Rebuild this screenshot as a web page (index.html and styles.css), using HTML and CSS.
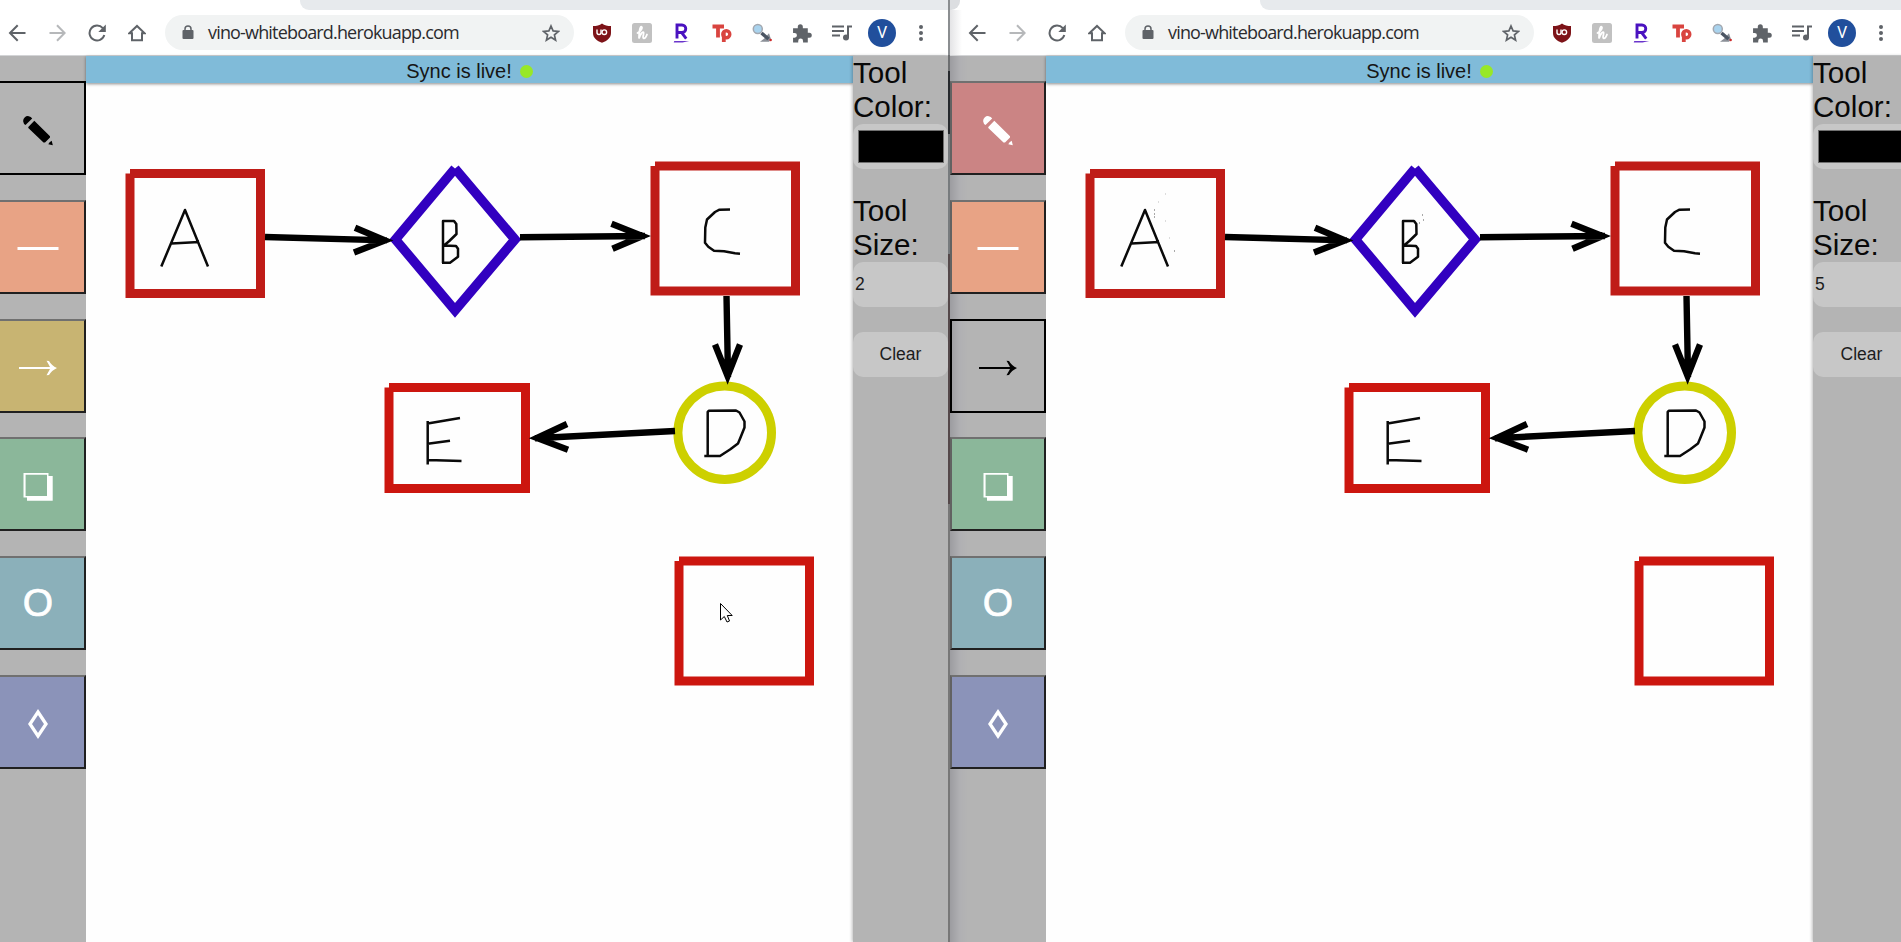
FILE: index.html
```html
<!DOCTYPE html>
<html lang="en">
<head>
<meta charset="utf-8">
<title>Whiteboard</title>
<link rel="stylesheet" href="styles.css">
</head>
<body>
<svg class="defs" width="0" height="0">
  <symbol id="back" viewBox="0 0 18 18"><path d="M17.500 9H2.500M9.700 1.200L2 9l7.700 7.800" fill="none" stroke="currentColor" stroke-width="2"/></symbol>
  <symbol id="forward" viewBox="0 0 18 18"><path d="M1.500 9h15M9 1.200L16.700 9l-7.700 7.800" fill="none" stroke="currentColor" stroke-width="2"/></symbol>
  <symbol id="reload" viewBox="0 0 18 18"><path d="M14.800 4.200A7.500 7.500 0 1 0 16.300 11" fill="none" stroke="currentColor" stroke-width="2"/><path d="M17.800 .5v7.500h-7.500z" fill="currentColor"/></symbol>
  <symbol id="home" viewBox="0 0 18 18"><path d="M1.300 9.300L9 2l7.700 7.300H14V16.300H4V9.300z" fill="none" stroke="currentColor" stroke-width="2"/></symbol>
  <symbol id="lock" viewBox="0 0 12 15"><rect x=".5" y="5" width="11" height="9" rx="1" fill="currentColor"/><path d="M3 6V4a3 3 0 0 1 6 0v2" fill="none" stroke="currentColor" stroke-width="1.500"/></symbol>
  <symbol id="star" viewBox="0 0 18 18"><path d="M9 2l2.100 4.900 5.300.5-4 3.500 1.200 5.200L9 13.300l-4.600 2.800 1.200-5.200-4-3.500 5.300-.5z" fill="none" stroke="currentColor" stroke-width="1.700"/></symbol>
  <symbol id="shield" viewBox="0 0 20 20"><path d="M10 .5C12.500 2.500 15.500 3 19 3V10c0 5-4 8-9 9.800C5 18 1 15 1 10V3c3.500 0 6.500-.5 9-2.500z" fill="#7d1318"/><path d="M5 6.500v3a2 2 0 0 0 4 0v-3" fill="none" stroke="#fff" stroke-width="1.400"/><circle cx="12.300" cy="9.200" r="2.300" fill="none" stroke="#fff" stroke-width="1.400"/></symbol>
  <symbol id="honey" viewBox="0 0 20 20"><rect width="20" height="20" rx="2.500" fill="#c1c1c1"/><path d="M5.500 10C9 8 11 4.500 9.500 3.800S7 9 7 15.500C8.500 11 10.500 8.500 11.500 9.300S10 14.500 11.500 15.200 14.500 13 15 11.500" fill="none" stroke="#fff" stroke-width="1.800" stroke-linecap="round"/></symbol>
  <symbol id="rakuten" viewBox="0 0 16 18"><path d="M3.500 14V1.800H8a3.200 3.200 0 0 1 0 6.800H3.500M7.500 8.500l4.300 5.500" fill="none" stroke="#4a12c0" stroke-width="2.600"/><path d="M.5 17.500h8l6-1.200H1z" fill="#6a35cc"/></symbol>
  <symbol id="tp" viewBox="0 0 20 18"><path d="M.5 2.500H12M6 2v11.500M11.800 18V8.500" fill="none" stroke="#d9443f" stroke-width="3.800"/><circle cx="14.300" cy="10.300" r="3.500" fill="none" stroke="#d9443f" stroke-width="3.400"/></symbol>
  <symbol id="inspect" viewBox="0 0 20 20"><path d="M8 18.800l4-3 5-5.500 2 6-2 2.500z" fill="#8b9098"/><path d="M9.500 10l7 6" stroke="#4b5563" stroke-width="3.500"/><circle cx="5.800" cy="6" r="4.500" fill="#a9d3ee" stroke="#a3a8b0" stroke-width="1.500"/><circle cx="18.700" cy="17" r="1.200" fill="#cb2b2b"/></symbol>
  <symbol id="puzzle" viewBox="0 0 19 19"><path d="M1 5h4.500V3.600a2.400 2.400 0 0 1 4.800 0V5H15v4.300h1.400a2.400 2.400 0 0 1 0 4.800H15V18.500H10.500V17a2.300 2.300 0 0 0-4.600 0v1.500H1V14h1.400a2.300 2.300 0 0 0 0-4.600H1z" fill="currentColor"/></symbol>
  <symbol id="queue" viewBox="0 0 20 17"><path d="M0 2h12M0 6.500h12M0 11h8M16 13V2H20" fill="none" stroke="currentColor" stroke-width="2"/><circle cx="14" cy="13" r="3" fill="currentColor"/></symbol>
  <symbol id="pencil" viewBox="0 0 30 30"><path d="M2.500 9A4.800 4.800 0 1 1 9.200 2.600zM5.300 11L11.300 4.800 27 20.300V21.500L22 26.500H20.500L5.300 12z" fill="currentColor"/><path d="M25.300 28.200Q26.200 26.300 28.700 24.800L29.800 29.300z" fill="currentColor"/></symbol>
  <symbol id="line" viewBox="0 0 42 30"><path d="M.5 14.500h41" stroke="currentColor" stroke-width="3"/></symbol>
  <symbol id="arrow" viewBox="0 0 38 30"><path d="M0 15H34" stroke="currentColor" stroke-width="2"/><path d="M27.500 7.800L30 8Q32.500 12.500 38 15 32.500 17.500 30 22L27.500 22.200Q30 18 31.500 15 30 12 27.500 7.800z" fill="currentColor"/></symbol>
  <symbol id="square" viewBox="0 0 30 30"><path fill-rule="evenodd" d="M.5 1H25.500V4H29.700V28.800H4V25.500H.5zM2.600 2.800V24H24V2.800z" fill="currentColor"/></symbol>
  <symbol id="rhomb" viewBox="0 0 20 30"><path d="M10 3l8 12L10 27 2 15z" fill="none" stroke="currentColor" stroke-width="3.300"/></symbol>
  <symbol id="board" viewBox="86 83 767 859">
    <g fill="none" stroke-width="9">
      <path stroke="#bf1c17" d="M130 173.500H260.500V293.500H130V173.500M655 166H795.500V291H655V166"/>
      <path stroke="#cc160f" d="M389 387.500H525.500V488.500H389V387.500M679 561H809.500V681H679V561"/>
      <path stroke="#3200c0" stroke-width="9.500" d="M455 168.500L515 239.500L455 310.300L395.500 239.500L455 168.500"/>
      <circle stroke="#cdd000" cx="724.700" cy="432.700" r="46.800"/>
      <g stroke="#000" stroke-width="6.400">
        <path d="M265 237L387 240.400M355 227.700L385 240.400L354 252.500M520 237.200L645 236M611.500 223.700L642.500 236L612.500 248.700M726.500 296L728 377M715 344.500L727.600 376L740 344.500M675 431L535 438.300M567 424L537 438L568 449.700"/>
      </g>
      <g stroke="#0a0a0a" stroke-width="2.500" stroke-linejoin="round">
        <path d="M161.300 266.500L185 210L208 266.500M171.500 243.500L199 242"/>
        <path d="M443 263V221L454 221L456.300 224L456.500 234L449.300 241L444 245.500L456 246L458 248.700V256.700L450 262.700H442"/>
        <path d="M730 209.500L719.500 209.700L715 212L707 219.500L705.300 227.500L705 242.700L708.300 246.700L714 250.700L724 251.300L735 253.300L740 253.700"/>
        <path d="M707.700 456V412L709 410.700L736 410.500L739.500 412.500L744.500 421.500V427.500L740.500 437.500L738 443.500L730 449.500L720 456H704.300"/>
        <path d="M427.700 421V464.500M427.700 423.500L460 418M427.700 443.700L450 440.700M427.700 460L461.500 461"/>
      </g>
    </g>
  </symbol>
</svg>

<div class="desktop">
  <section class="window window-left">
    <div class="tabs"><div class="tab-active"></div><div class="tab-rest"></div></div>
    <div class="toolbar">
      <svg class="nav"><use href="#back"/></svg>
      <svg class="nav dim"><use href="#forward"/></svg>
      <svg class="nav"><use href="#reload"/></svg>
      <svg class="nav"><use href="#home"/></svg>
      <div class="address"><svg class="lock"><use href="#lock"/></svg><span class="url">vino-whiteboard.herokuapp.com</span><svg class="star"><use href="#star"/></svg></div>
      <div class="extensions">
        <svg><use href="#shield"/></svg><svg><use href="#honey"/></svg><svg><use href="#rakuten"/></svg><svg><use href="#tp"/></svg><svg><use href="#inspect"/></svg><svg><use href="#puzzle"/></svg><svg><use href="#queue"/></svg>
      </div>
      <span class="avatar">V</span>
      <span class="menu"><i></i><i></i><i></i></span>
    </div>
    <div class="page">
      <nav class="tools">
        <button class="tool active"><svg class="i30"><use href="#pencil"/></svg></button>
        <button class="tool orange"><svg class="i42"><use href="#line"/></svg></button>
        <button class="tool gold"><svg class="i38"><use href="#arrow"/></svg></button>
        <button class="tool green"><svg class="i30"><use href="#square"/></svg></button>
        <button class="tool teal">O</button>
        <button class="tool violet"><svg class="i20"><use href="#rhomb"/></svg></button>
      </nav>
      <main class="main">
        <header class="status">Sync is live!<span class="dot"></span></header>
        <svg class="board"><use href="#board"/></svg>
      </main>
      <aside class="settings">
        <label>Tool Color:</label>
        <div class="field swatch"><span></span></div>
        <label>Tool Size:</label>
        <div class="field size">2</div>
        <button class="field clear">Clear</button>
      </aside>
    </div>
    <svg class="cursor" viewBox="0 0 13 20"><path d="M.5 .5V17L4.300 13.500 7 19 9.500 18 7.300 12.500H12.200z" fill="#fff" stroke="#000"/></svg>
  </section>
  <div class="edge"></div>
  <section class="window window-right">
    <div class="tabs"><div class="tab-prev"></div><div class="tab-active"></div><div class="tab-rest"></div></div>
    <div class="toolbar">
      <svg class="nav"><use href="#back"/></svg>
      <svg class="nav dim"><use href="#forward"/></svg>
      <svg class="nav"><use href="#reload"/></svg>
      <svg class="nav"><use href="#home"/></svg>
      <div class="address"><svg class="lock"><use href="#lock"/></svg><span class="url">vino-whiteboard.herokuapp.com</span><svg class="star"><use href="#star"/></svg></div>
      <div class="extensions">
        <svg><use href="#shield"/></svg><svg><use href="#honey"/></svg><svg><use href="#rakuten"/></svg><svg><use href="#tp"/></svg><svg><use href="#inspect"/></svg><svg><use href="#puzzle"/></svg><svg><use href="#queue"/></svg>
      </div>
      <span class="avatar">V</span>
      <span class="menu"><i></i><i></i><i></i></span>
    </div>
    <div class="page">
      <nav class="tools">
        <button class="tool red"><svg class="i30"><use href="#pencil"/></svg></button>
        <button class="tool orange"><svg class="i42"><use href="#line"/></svg></button>
        <button class="tool active"><svg class="i38"><use href="#arrow"/></svg></button>
        <button class="tool green"><svg class="i30"><use href="#square"/></svg></button>
        <button class="tool teal">O</button>
        <button class="tool violet"><svg class="i20"><use href="#rhomb"/></svg></button>
      </nav>
      <main class="main">
        <header class="status">Sync is live!<span class="dot"></span></header>
        <svg class="board" viewBox="86 83 767 859">
          <use href="#board" x="86" y="83" width="767" height="859"/>
          <path d="M194 210h1M194 214h1M194 217h1M214 251h1M463 220h1M462 215h1M459 223h1" stroke="#555"/>
          <path d="M198 202h1M205 194h1M205 221h1M209 238h1" stroke="#bbb"/>
        </svg>
      </main>
      <aside class="settings">
        <label>Tool Color:</label>
        <div class="field swatch"><span></span></div>
        <label>Tool Size:</label>
        <div class="field size">5</div>
        <button class="field clear">Clear</button>
      </aside>
    </div>
  </section>
</div>
</body>
</html>
```
FILE: styles.css
```css
* { box-sizing: border-box; }
body { margin: 0; overflow: hidden; font-family: "Liberation Sans", Arial, sans-serif; }
.defs { position: absolute; }
.desktop { display: flex; width: 1901px; height: 942px; overflow: hidden; }
.window { position: relative; flex: none; height: 942px; display: flex; flex-direction: column; background: #fff; overflow: hidden; }
.window-left { width: 958px; margin-left: -10px; }
.window-right { width: 960px; }
.edge { flex: none; width: 2px; background: linear-gradient(#8b8e91 0 55px, #6c6e70 55px 71px, #26292d 71px 134px, #777b7e 134px 254px, #54484a 254px 504px, #777 504px); }

.tabs { flex: none; height: 10px; display: flex; }
.tab-active { width: 310px; background: #fff; }
.tab-prev { width: 10px; background: #dcdee1; border-bottom-right-radius: 9px; }
.tab-prev + .tab-active { width: 300px; }
.tab-rest { flex: 1; background: #e7eaed; border-bottom-left-radius: 9px; }

.toolbar { flex: none; height: 46px; display: flex; align-items: center; padding: 0 22px 0 18px; border-bottom: 1px solid #d3d4d6; color: #5f6368; }
.window-right .toolbar { background: linear-gradient(90deg, #e4e4e6, #fff 12px); }
.nav { width: 18px; height: 18px; margin-right: 22px; }
.dim { opacity: .45; }
.address { width: 409px; height: 35px; margin-left: -3px; padding: 0 14px 0 17px; border-radius: 18px; background: #f1f3f3; display: flex; align-items: center; }
.lock { width: 12px; height: 15px; }
.url { margin-left: 14px; font: 18px/35px "Open Sans", "Noto Sans", sans-serif; color: #2b2b2e; letter-spacing: -.83px; white-space: nowrap; }
.star { width: 18px; height: 18px; margin-left: auto; }
.extensions { display: flex; gap: 20px; margin-left: 18px; }
.extensions svg { width: 20px; height: 20px; }
.avatar { width: 28px; height: 28px; margin-left: 16px; border-radius: 50%; background: #214f9c; color: #fff; font: 16px/28px Roboto, sans-serif; text-align: center; }
.menu { display: flex; flex-direction: column; gap: 2px; margin-left: 23px; }
.menu i { width: 4px; height: 4px; border-radius: 50%; background: #5f6368; }

.page { flex: 1; display: flex; min-height: 0; }
.tools { flex: none; width: 96px; padding-top: 25px; display: flex; flex-direction: column; gap: 24.8px; background: #b4b4b4; }
.window-right .tools { background: linear-gradient(90deg, #9c9ca0, #b0b0b3 10px, #b4b4b4 18px); }
.tool { flex: none; width: 96px; height: 94px; margin: 0; padding: 5px 0 0; border: 2px solid; border-color: #707070 #202020 #202020 #626262; color: #fff; font: 40px/1 "Liberation Sans", Arial, sans-serif; display: flex; align-items: center; justify-content: center; }
.tool.active { background: transparent; border-color: #000; color: #000; }
.red { background: #cb8484; }
.orange { background: #e8a385; }
.gold { background: #c8b472; }
.green { background: #8bb79a; }
.teal { background: #8bb0ba; padding: 0 0 2px; font-size: 39px; -webkit-text-stroke: .7px #fff; }
.violet { background: #8b93b9; }
.i20 { width: 20px; height: 30px; }
.i30 { width: 30px; height: 30px; }
.i38 { width: 38px; height: 30px; }
.i42 { width: 42px; height: 30px; }

.main { flex: none; width: 767px; display: flex; flex-direction: column; background: #fefefe; }
.status { flex: none; height: 27px; display: flex; align-items: center; justify-content: center; background: #80bbd9; box-shadow: 0 1px 3px rgba(0,0,0,.45); font-size: 20px; line-height: 30px; padding-top: 3px; color: #161616; }
.dot { width: 13px; height: 13px; margin-left: 8px; border-radius: 50%; background: #98e827; }
.board { width: 767px; height: 859px; }

.settings { flex: none; width: 97px; background: #b4b4b4; display: flex; flex-direction: column; box-shadow: -1px 0 3px rgba(0,0,0,.25); }
.window-left .settings { width: 95px; }
.settings label { height: 68px; font-size: 29.600px; line-height: 34px; color: #080808; }
.field { flex: none; height: 45px; margin: 0 0 25px; padding: 0; border: 0; border-radius: 10px; background: #c7c7c7; color: #1c1c1c; font: 17.500px/45px "Liberation Sans", Arial, sans-serif; }
.swatch { padding: 6px 4px 6px 5px; display: flex; }
.swatch span { flex: 1; border: 1px solid #707070; background: #000; }
.size { padding-left: 2px; line-height: 44px; }
.clear { text-align: center; }
.cursor { position: absolute; left: 729.500px; top: 602.500px; width: 13px; height: 20px; }
```
